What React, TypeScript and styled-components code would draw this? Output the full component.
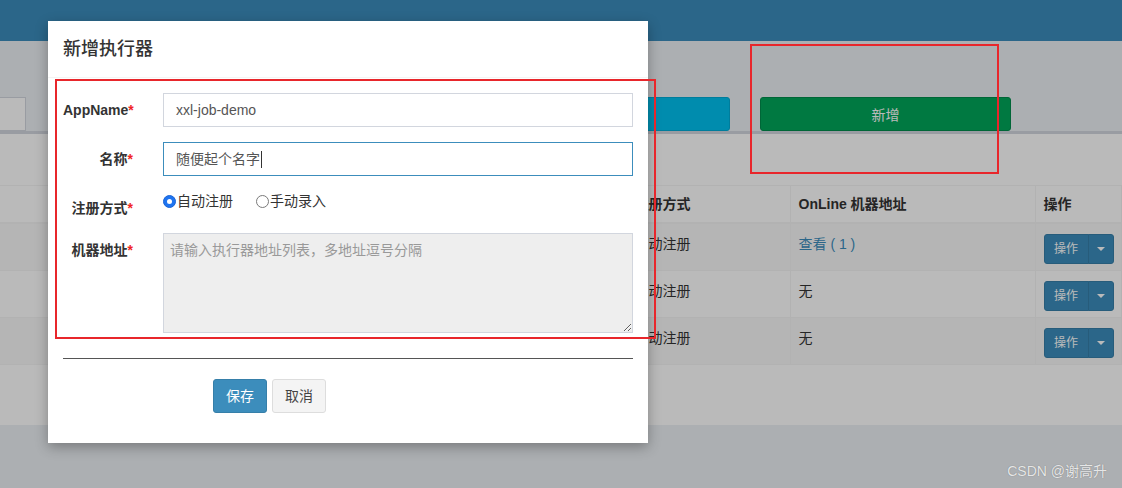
import React from 'react';
import styled, { createGlobalStyle, css } from 'styled-components';

const GlobalStyle = createGlobalStyle`
  html, body { margin: 0; padding: 0; height: 100%; overflow: hidden; }
  body {
    font-family: "Helvetica Neue", Helvetica, "Liberation Sans", "Noto Sans CJK SC", sans-serif;
    font-size: 14px;
    color: #333;
    background: #ecf0f5;
  }
  * { box-sizing: border-box; }
`;

const Page = styled.div`
  position: relative;
  width: 1122px;
  height: 488px;
  overflow: hidden;
  background: #ecf0f5;
`;

const TopBar = styled.header`
  height: 41px;
  background: #3c8dbc;
`;

const ActionRow = styled.div`
  display: flex;
  align-items: flex-end;
  gap: 30px;
  height: 90px;
  padding-right: 111px;
`;

const FilterInput = styled.div`
  width: 26px;
  height: 34px;
  margin-right: auto;
  background: #fff;
  border: 1px solid #d2d6de;
  border-left: none;
`;

const ActionButton = styled.button<{ $tone: 'info' | 'success' }>`
  width: 251px;
  height: 34px;
  border: 1px solid;
  border-radius: 3px;
  color: #fff;
  font: inherit;
  font-size: 14px;
  ${({ $tone }) =>
    $tone === 'info'
      ? css`background: #00c0ef; border-color: #00acd6;`
      : css`background: #00a65a; border-color: #008d4c;`}
`;

const Box = styled.section`
  height: 294px;
  padding-top: 51px;
  background: #fff;
  border-top: 3px solid #d2d6de;
`;

const Table = styled.table`
  width: 100%;
  border-collapse: collapse;
  table-layout: fixed;
  th:first-child, td:first-child { border-left: none; }
`;

const Col = styled.col<{ $w?: number }>`
  width: ${({ $w }) => ($w ? `${$w}px` : 'auto')};
`;

const Th = styled.th`
  padding: 8px;
  line-height: 20px;
  text-align: left;
  font-weight: bold;
  border: 1px solid #f4f4f4;
  border-bottom-width: 2px;
  white-space: nowrap;
`;

const Tr = styled.tr<{ $striped?: boolean }>`
  background: ${({ $striped }) => ($striped ? '#f9f9f9' : '#fff')};
`;

const Td = styled.td`
  padding: 10px 8px 6px;
  line-height: 20px;
  vertical-align: top;
  text-align: left;
  border: 1px solid #f4f4f4;
  white-space: nowrap;
`;

const Link = styled.a`
  color: #3c8dbc;
  text-decoration: none;
`;

const OpGroup = styled.div`
  display: inline-flex;
`;

const OpButton = styled.button<{ $caret?: boolean }>`
  display: flex;
  align-items: center;
  justify-content: center;
  height: 30px;
  padding: ${({ $caret }) => ($caret ? '5px 8px' : '5px 10px')};
  width: ${({ $caret }) => ($caret ? '26px' : '45px')};
  font: inherit;
  font-size: 12px;
  line-height: 18px;
  color: #fff;
  background: #3c8dbc;
  border: 1px solid #367fa9;
  border-radius: ${({ $caret }) => ($caret ? '0 3px 3px 0' : '3px 0 0 3px')};
  ${({ $caret }) => $caret && css`margin-left: -1px;`}
`;

const Caret = styled.span`
  width: 0;
  height: 0;
  border-top: 4px solid #fff;
  border-left: 4px solid transparent;
  border-right: 4px solid transparent;
`;

const Backdrop = styled.div`
  position: absolute;
  inset: 0;
  background: rgba(0, 0, 0, 0.27);
`;

const Modal = styled.div`
  position: absolute;
  left: 48px;
  top: 21px;
  width: 600px;
  background: #fff;
  box-shadow: 0 4px 12px rgba(0, 0, 0, 0.3);
`;

const ModalHeader = styled.div`
  padding: 15px;
  border-bottom: 1px solid #f4f4f4;
`;

const ModalTitle = styled.h4`
  margin: 0;
  font-size: 18px;
  font-weight: 500;
  line-height: 26px;
  color: #333;
`;

const ModalBody = styled.div`
  padding: 15px 15px 30px;
`;

const FormGroup = styled.div`
  display: grid;
  grid-template-columns: 70px 1fr;
  column-gap: 30px;
  margin-bottom: 15px;
`;

const Label = styled.label`
  padding-top: 7px;
  line-height: 20px;
  text-align: right;
  font-weight: bold;
  color: #333;
  white-space: nowrap;
`;

const Required = styled.span`
  color: #f02424;
`;

const Field = styled.div<{ $focused?: boolean }>`
  display: flex;
  align-items: center;
  height: 34px;
  padding: 6px 12px;
  line-height: 20px;
  color: #555;
  border: 1px solid ${({ $focused }) => ($focused ? '#3c8dbc' : '#d2d6de')};
`;

const TextCaret = styled.span`
  width: 1px;
  height: 17px;
  margin-left: 1px;
  background: #333;
`;

const RadioRow = styled.div`
  display: flex;
  align-items: center;
  gap: 23px;
  height: 20px;
`;

const RadioOption = styled.label`
  display: flex;
  align-items: center;
  gap: 1px;
  line-height: 20px;
  color: #333;
`;

const RadioMark = styled.span<{ $checked?: boolean }>`
  position: relative;
  width: 13px;
  height: 13px;
  border-radius: 50%;
  ${({ $checked }) =>
    $checked
      ? css`
          background: #1f74f0;
          border: 1px solid #1a64d6;
          &::after {
            content: '';
            position: absolute;
            left: 3px;
            top: 3px;
            width: 5px;
            height: 5px;
            border-radius: 50%;
            background: #fff;
          }
        `
      : css`
          background: #fff;
          border: 1px solid #7a7a7a;
        `}
`;

const TextArea = styled.textarea`
  display: block;
  width: 100%;
  height: 100px;
  padding: 6px;
  font: inherit;
  font-size: 14px;
  line-height: 20px;
  color: #555;
  background: #eee;
  border: 1px solid #d2d6de;
  border-radius: 0;
  outline: none;
  &::placeholder { color: #999; }
`;

const Divider = styled.hr`
  margin: 25px 0 20px;
  border: 0;
  border-top: 1px solid #555;
`;

const FooterButtons = styled.div`
  display: flex;
  gap: 5px;
  padding-left: 150px;
`;

const FormButton = styled.button<{ $primary?: boolean }>`
  height: 34px;
  padding: 6px 12px;
  font: inherit;
  font-size: 14px;
  line-height: 20px;
  border: 1px solid;
  border-radius: 3px;
  ${({ $primary }) =>
    $primary
      ? css`background: #3c8dbc; border-color: #367fa9; color: #fff;`
      : css`background: #f4f4f4; border-color: #ddd; color: #444;`}
`;

const Annotation = styled.div<{ $x: number; $y: number; $w: number; $h: number }>`
  position: absolute;
  left: ${({ $x }) => $x}px;
  top: ${({ $y }) => $y}px;
  width: ${({ $w }) => $w}px;
  height: ${({ $h }) => $h}px;
  border: 2px solid #e8262b;
  pointer-events: none;
`;

const Watermark = styled.div`
  position: absolute;
  right: 15px;
  top: 461px;
  font-size: 14px;
  line-height: 20px;
  color: rgba(255, 255, 255, 0.82);
  text-shadow: 0 0 1px rgba(0, 0, 0, 0.35);
`;

// the first columns sit behind the dialog, so they stay empty here
const rows = [
  { id: 1, online: 'link' },
  { id: 2, online: '无' },
  { id: 3, online: '无' },
];

export default function App() {
  return (
    <Page>
      <GlobalStyle />
      <TopBar />
      <ActionRow>
        <FilterInput />
        <ActionButton $tone="info" />
        <ActionButton $tone="success">新增</ActionButton>
      </ActionRow>
      <Box>
        <Table>
          <colgroup>
            <Col $w={160} />
            <Col $w={240} />
            <Col $w={226} />
            <Col $w={164} />
            <Col $w={245} />
            <Col />
          </colgroup>
          <thead>
            <tr>
              <Th />
              <Th />
              <Th />
              <Th>注册方式</Th>
              <Th>OnLine 机器地址</Th>
              <Th>操作</Th>
            </tr>
          </thead>
          <tbody>
            {rows.map((r, i) => (
              <Tr key={r.id} $striped={i % 2 === 0}>
                <Td />
                <Td />
                <Td />
                <Td>自动注册</Td>
                <Td>{r.online === 'link' ? <Link href="#">查看 ( 1 )</Link> : r.online}</Td>
                <Td>
                  <OpGroup>
                    <OpButton>操作</OpButton>
                    <OpButton $caret>
                      <Caret />
                    </OpButton>
                  </OpGroup>
                </Td>
              </Tr>
            ))}
          </tbody>
        </Table>
      </Box>

      <Backdrop />

      <Modal>
        <ModalHeader>
          <ModalTitle>新增执行器</ModalTitle>
        </ModalHeader>
        <ModalBody>
          <FormGroup>
            <Label>AppName<Required>*</Required></Label>
            <Field>xxl-job-demo</Field>
          </FormGroup>
          <FormGroup>
            <Label>名称<Required>*</Required></Label>
            <Field $focused>
              随便起个名字
              <TextCaret />
            </Field>
          </FormGroup>
          <FormGroup>
            <Label>注册方式<Required>*</Required></Label>
            <RadioRow>
              <RadioOption>
                <RadioMark $checked />
                自动注册
              </RadioOption>
              <RadioOption>
                <RadioMark />
                手动录入
              </RadioOption>
            </RadioRow>
          </FormGroup>
          <FormGroup>
            <Label>机器地址<Required>*</Required></Label>
            <TextArea readOnly placeholder="请输入执行器地址列表，多地址逗号分隔" />
          </FormGroup>
          <Divider />
          <FooterButtons>
            <FormButton $primary>保存</FormButton>
            <FormButton>取消</FormButton>
          </FooterButtons>
        </ModalBody>
      </Modal>

      <Annotation $x={55} $y={79} $w={601} $h={260} />
      <Annotation $x={750} $y={44} $w={249} $h={130} />

      <Watermark>CSDN @谢高升</Watermark>
    </Page>
  );
}
